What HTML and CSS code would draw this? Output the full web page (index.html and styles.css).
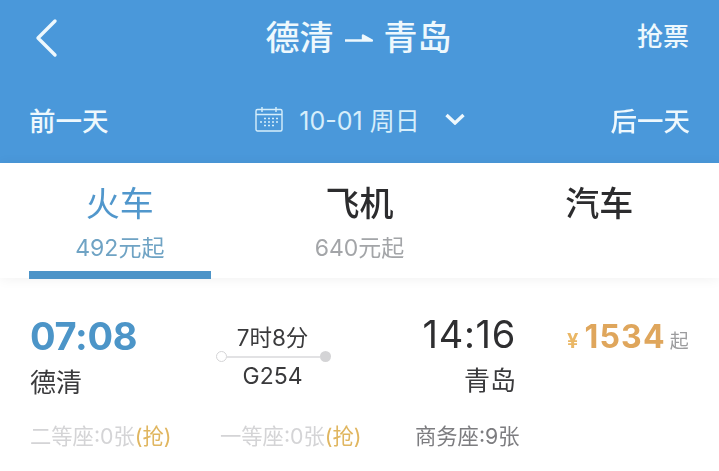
FILE: index.html
```html
<!DOCTYPE html>
<html lang="zh">
<head>
<meta charset="utf-8">
<title>德清 - 青岛</title>
<link rel="stylesheet" href="styles.css">
</head>
<body>
<div class="page">
  <header class="header">
    <div class="top">
      <svg class="back" width="24" height="40" viewBox="0 0 24 40"><path d="M21 3 L4 20 L21 37" fill="none" stroke="#eef8fd" stroke-width="3.4" stroke-linecap="round" stroke-linejoin="round"/></svg>
      <div class="title">
        <span>德清</span>
        <svg class="arrow" width="28" height="14" viewBox="0 0 28 14"><path d="M0 8.5 H27 L18 3.5 V8.5" fill="#eef8fd" stroke="#eef8fd" stroke-width="2.4" stroke-linejoin="round"/></svg>
        <span>青岛</span>
      </div>
      <div class="grab">抢票</div>
    </div>
    <div class="dates">
      <div class="day">前一天</div>
      <div class="date">
        <svg class="cal" width="28" height="26" viewBox="0 0 28 26">
          <rect x="1" y="3.5" width="26" height="21.5" rx="1.5" fill="none" stroke="#d6eefb" stroke-width="1.4"/>
          <path d="M1 8.5 H27 M7 1 V6 M21 1 V6" fill="none" stroke="#d6eefb" stroke-width="1.4"/>
          <path d="M9 12.5 H11 M13 12.5 H15 M17 12.5 H19 M21 12.5 H23 M5 16 H7 M9 16 H11 M13 16 H15 M17 16 H19 M21 16 H23 M9 19.5 H11 M13 19.5 H15 M17 19.5 H19" fill="none" stroke="#d6eefb" stroke-width="1.6"/>
        </svg>
        <span class="date-text">10-01 周日</span>
        <svg class="chev" width="20" height="12" viewBox="0 0 20 12"><path d="M1.5 2 L10 10 L18.5 2" fill="none" stroke="#eef8fd" stroke-width="3.4"/></svg>
      </div>
      <div class="day">后一天</div>
    </div>
  </header>

  <nav class="tabs">
    <div class="tab active">
      <div class="tab-name">火车</div>
      <div class="tab-price">492元起</div>
    </div>
    <div class="tab">
      <div class="tab-name">飞机</div>
      <div class="tab-price">640元起</div>
    </div>
    <div class="tab">
      <div class="tab-name">汽车</div>
    </div>
  </nav>

  <section class="train">
    <div class="trip">
      <div class="from">
        <div class="time time-dep">07:08</div>
        <div class="city">德清</div>
      </div>
      <div class="mid">
        <div class="mid-text">7时8分</div>
        <div class="track"><i class="dot dot-start"></i><i class="line"></i><i class="dot dot-end"></i></div>
        <div class="mid-text mid-code">G254</div>
      </div>
      <div class="to">
        <div class="time time-arr">14:16</div>
        <div class="city city-arr">青岛</div>
      </div>
      <div class="price"><span class="yen">¥</span><span class="amount">1534</span><span class="from-label">起</span></div>
    </div>
    <div class="seats">
      <div class="seat seat-out">二等座:0张<span class="rush">(抢)</span></div>
      <div class="seat seat-out">一等座:0张<span class="rush">(抢)</span></div>
      <div class="seat">商务座:9张</div>
    </div>
  </section>
</div>
</body>
</html>
```
FILE: styles.css
```css
* { box-sizing: border-box; }
html, body { margin: 0; padding: 0; background: #fff; }
body {
  width: 719px;
  height: 471px;
  overflow: hidden;
  font-family: Inter, "Noto Sans CJK SC", sans-serif;
}
.page { filter: blur(0.5px); }

.header { background: #4a98da; height: 163px; color: #eef8fd; }
.top {
  height: 76px;
  display: grid;
  grid-template-columns: 1fr auto 1fr;
  align-items: center;
  padding: 0 31px 0 29px;
}
.back { display: block; margin-left: 5px; }
.title {
  display: flex;
  align-items: center;
  gap: 11px;
  font-size: 34px;
  font-weight: 500;
  line-height: 40px;
}
.arrow { display: block; margin-top: 2px; }
.grab { justify-self: end; font-size: 26px; font-weight: 500; line-height: 30px; margin: -2px -1px 0 0; }
.dates {
  height: 87px;
  display: grid;
  grid-template-columns: 1fr auto 1fr;
  align-items: center;
  padding: 0 29px 1px;
}
.day { font-size: 26.5px; font-weight: 500; }
.day:last-child { justify-self: end; }
.date { display: flex; align-items: center; font-size: 25px; color: #d6eefb; margin-left: 1px; }
.date-text { margin-left: 16px; }
.chev { margin-left: 25px; }

.tabs {
  height: 115px;
  display: grid;
  grid-template-columns: repeat(3, 1fr);
  position: relative;
  box-shadow: 0 1px 12px rgba(0, 0, 0, 0.06);
  background: #fff;
  padding-top: 21px;
}
.tab { text-align: center; position: relative; }
.tab-name { font-size: 34px; line-height: 40px; color: #2c2c2e; font-weight: 500; }
.tab-price { font-size: 23px; line-height: 28px; margin-top: 10px; color: #a3a5a8; }
.tab.active .tab-name { color: #5197cc; font-weight: 400; }
.tab.active .tab-price { color: #6fa3c4; }
.tab.active::after {
  content: "";
  position: absolute;
  left: 29px;
  top: 87px;
  width: 182px;
  height: 8px;
  background: #4d94c8;
}

.train { padding: 36px 0 0 30px; }
.trip {
  display: grid;
  grid-template-columns: 190px 105px 191px auto;
  align-items: start;
}
.time { font-size: 38px; line-height: 44px; }
.time-dep { font-weight: 700; color: #4c95c8; letter-spacing: -0.3px; }
.time-arr { color: #2e2e30; text-align: right; letter-spacing: 0.7px; margin-top: -2px; }
.to { text-align: right; }
.city { font-size: 26px; line-height: 36px; margin-top: 7px; color: #3a3a3c; }
.city-arr { margin-top: 7px; }
.mid { text-align: center; padding-top: 11px; font-size: 22.5px; color: #3a3a3c; white-space: nowrap; }
.mid-text { line-height: 26px; }
.mid-code { font-size: 23px; }
.track { display: flex; align-items: center; height: 13px; margin: -1px -6px 0 -4px; }
.dot { display: block; width: 11px; height: 11px; border-radius: 50%; flex: none; }
.dot-start { border: 1.5px solid #d4d4d6; background: #fff; }
.dot-end { background: #d4d4d6; }
.line { display: block; flex: 1; height: 2px; background: #e2e2e4; }
.price {
  margin-left: 51px;
  display: flex;
  align-items: baseline;
  white-space: nowrap;
  padding-top: 1px;
  line-height: 44px;
}
.yen { font-size: 20px; font-weight: 700; color: #eab765; }
.amount { font-size: 32px; font-weight: 700; color: #dfa65c; margin-left: 6px; letter-spacing: 1.2px; }
.from-label { font-size: 19px; color: #9c9c9e; margin-left: 4px; }

.seats {
  display: grid;
  grid-template-columns: 190px 195px auto;
  margin-top: 21px;
  font-size: 21.3px;
  line-height: 28px;
}
.seat { color: #7d7d80; white-space: nowrap; }
.seat-out { color: #d4d4d6; }
.rush { color: #e0b660; }
```
